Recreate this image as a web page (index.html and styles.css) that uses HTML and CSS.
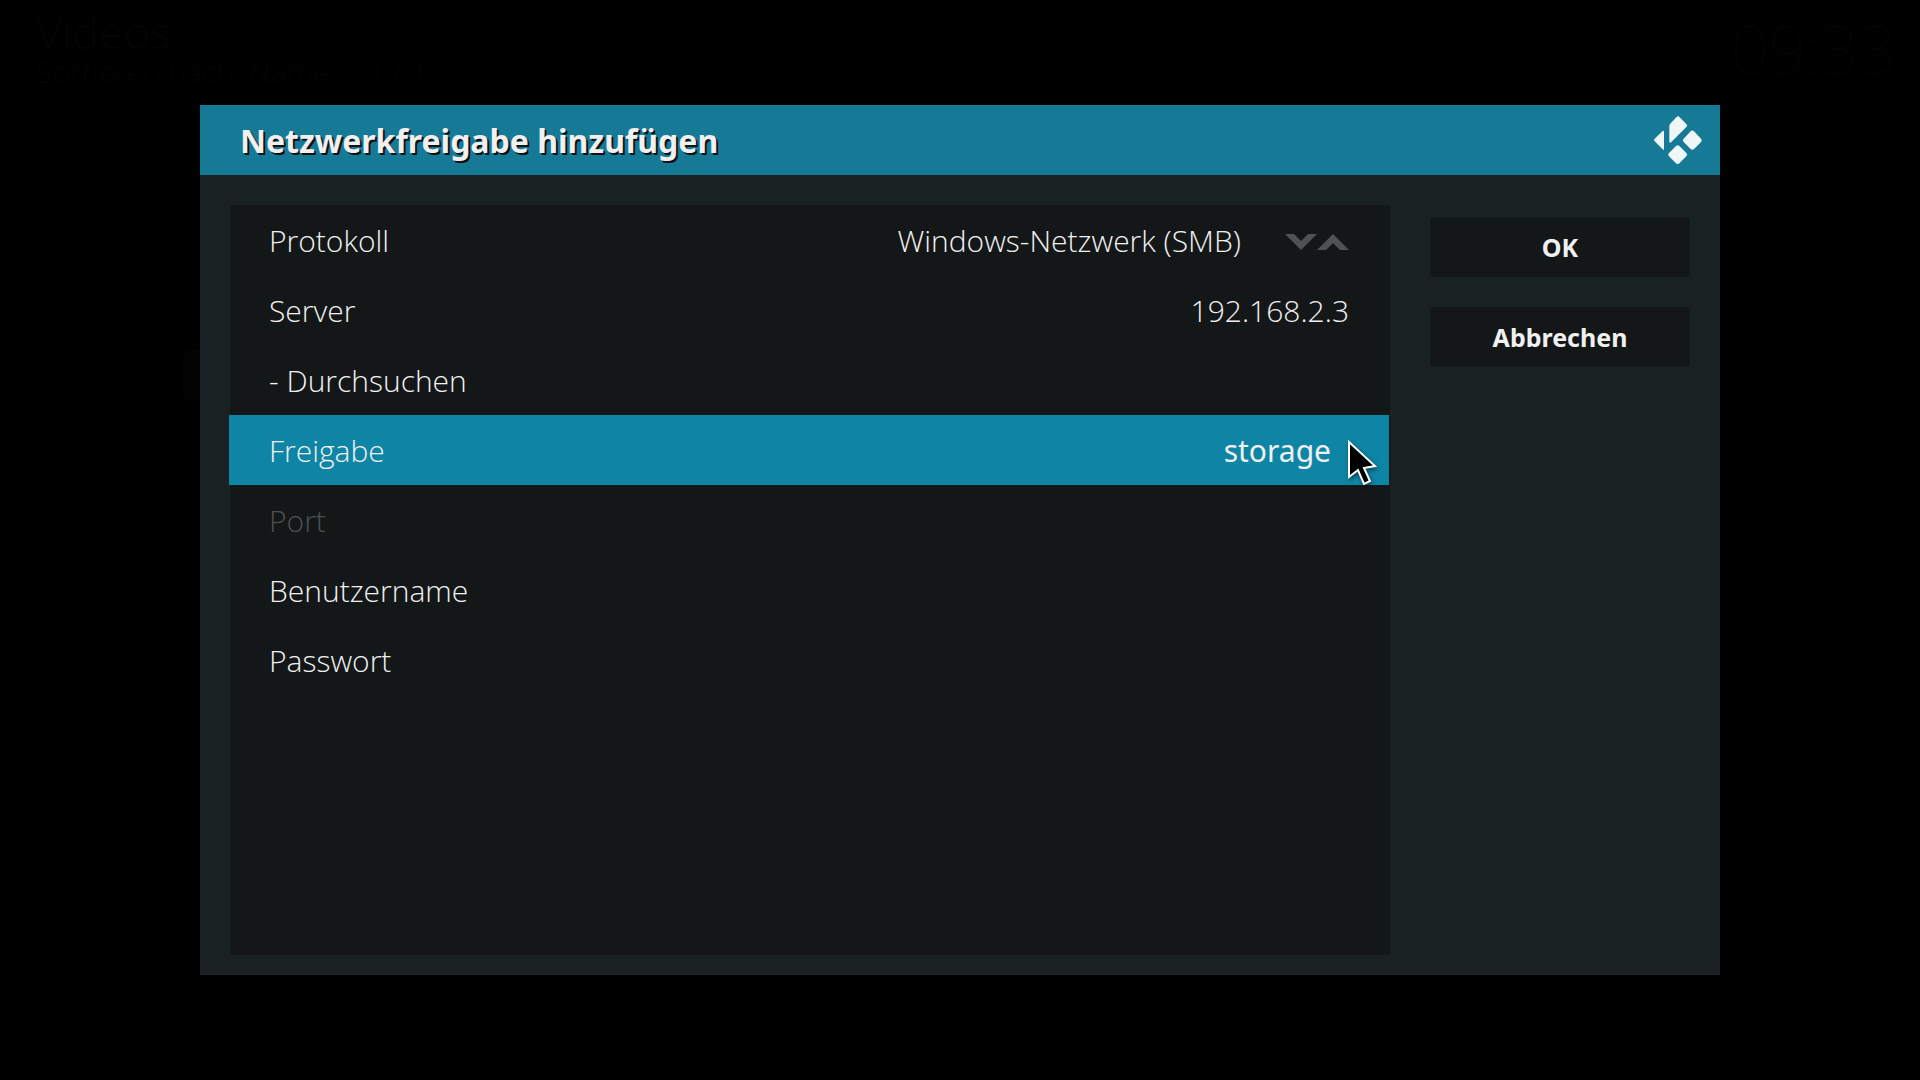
FILE: index.html
```html
<!DOCTYPE html>
<html lang="de">
<head>
    <meta charset="UTF-8">
    <meta name="viewport" content="width=device-width, initial-scale=1.0">
    <title>Netzwerkfreigabe hinzufügen</title>
    <link rel="stylesheet" href="styles.css">
</head>
<body>
    <header class="topbar">
        <div class="breadcrumb">
            <div class="section">Videos</div>
            <div class="sorting">Sortieren nach: Name &nbsp;·&nbsp; 1 / 1</div>
        </div>
        <time class="clock">09:33</time>
    </header>
    <div class="background-item"></div>

    <main class="dialog">
        <div class="dialog-header">
            <h1>Netzwerkfreigabe hinzufügen</h1>
            <svg class="logo" viewBox="0 0 144 144" aria-hidden="true">
                <path d="M30 47V99Q30 104 26 100L2 76Q-2 72 2 68L26 45Q30 42 30 47Z"/>
                <path d="M46 76V31Q46 26 50 22L67 4Q72 -2 77 4L97 24Q102 28 97 33L52 78Q46 83 46 76Z"/>
                <path d="M110 46Q115 41 120 46L141 68Q146 73 141 78L120 99Q115 104 110 99L89 78Q84 73 89 68Z"/>
                <path d="M66 90Q71 85 76 90L97 111Q102 116 97 121L76 142Q71 147 66 142L45 121Q40 116 45 111Z"/>
            </svg>
        </div>
        <form class="dialog-body">
            <div class="settings">
                <div class="row">
                    <label for="protocol">Protokoll</label>
                    <select id="protocol" name="protocol">
                        <option>Windows-Netzwerk (SMB)</option>
                    </select>
                    <div class="spinner">
                        <button type="button" aria-label="Weiter">
                            <svg viewBox="0 0 32 16"><path d="M0 0H9L16 7L23 0H32L16 16Z"/></svg>
                        </button>
                        <button type="button" aria-label="Zurück">
                            <svg viewBox="0 0 32 16"><path d="M0 16H9L16 9L23 16H32L16 0Z"/></svg>
                        </button>
                    </div>
                </div>
                <div class="row">
                    <label for="server">Server</label>
                    <input type="text" id="server" name="server" value="192.168.2.3">
                </div>
                <button type="button" class="row browse">- Durchsuchen</button>
                <div class="row focused">
                    <label for="share">Freigabe</label>
                    <input type="text" id="share" name="share" value="storage">
                    <svg class="pointer" viewBox="0 0 32 48" aria-hidden="true">
                        <path d="M2 2V37L11 30L17 44L23 41L17 28L28 26Z"/>
                    </svg>
                </div>
                <div class="row disabled">
                    <label for="port">Port</label>
                    <input type="text" id="port" name="port" disabled>
                </div>
                <div class="row">
                    <label for="username">Benutzername</label>
                    <input type="text" id="username" name="username">
                </div>
                <div class="row">
                    <label for="password">Passwort</label>
                    <input type="password" id="password" name="password">
                </div>
            </div>
            <div class="actions">
                <button type="submit">OK</button>
                <button type="button">Abbrechen</button>
            </div>
        </form>
    </main>
</body>
</html>
```

FILE: styles.css
```css
* {
    box-sizing: border-box;
}
body {
    display: flex;
    flex-direction: column;
    min-height: 100vh;
    margin: 0;
    padding-bottom: 105px;
    background: #000;
    color: #f0f0f0;
    font-family: "Open Sans", "Noto Sans", sans-serif;
    font-size: 30px;
    font-weight: 300;
}
button,
input,
select {
    margin: 0;
    padding: 0;
    border: none;
    background: none;
    color: inherit;
    font: inherit;
    outline: none;
}

/* Dimmed window behind the dialog */
.topbar {
    display: flex;
    justify-content: space-between;
    height: 105px;
    padding: 8px 24px 0 36px;
    color: #040404;
}
.section {
    font-size: 45px;
    line-height: 48px;
}
.sorting {
    line-height: 32px;
}
.clock {
    font-family: "Noto Sans", sans-serif;
    font-size: 66px;
    font-weight: 100;
    line-height: 80px;
}
.background-item {
    position: absolute;
    top: 350px;
    left: 183px;
    width: 60px;
    height: 50px;
    border-radius: 6px;
    background: #030303;
}

/* Dialog */
.dialog {
    position: relative;
    display: flex;
    flex-direction: column;
    flex: 1;
    margin: 0 200px;
    background: #1a2123;
}
.dialog-header {
    display: flex;
    align-items: center;
    justify-content: space-between;
    height: 70px;
    padding: 0 18px 0 40px;
    background: #167a97;
}
h1 {
    margin: 0;
    font-family: "Noto Sans", sans-serif;
    font-size: 32px;
    font-weight: 700;
    text-shadow: 2px 2px 0 #111;
}
.logo {
    width: 48px;
    height: 48px;
    fill: #eef6f8;
    overflow: visible;
}
.dialog-body {
    display: flex;
    flex: 1;
    gap: 40px;
    padding: 30px 30px 20px;
}

/* Settings list */
.settings {
    flex: 1;
    border-radius: 4px;
    background: #141718;
}
.row {
    position: relative;
    display: flex;
    align-items: center;
    width: 100%;
    height: 70px;
    margin-left: -1px;
    padding: 0 40px;
}
.row input,
.row select {
    flex: 1;
    min-width: 0;
    height: 70px;
    text-align: right;
    text-align-last: right;
    appearance: none;
}
.browse {
    text-align: left;
}
.focused {
    background: #0f85a5;
}
.focused input {
    padding-right: 18px;
    font-family: "Noto Sans", sans-serif;
    font-weight: 400;
}
.disabled {
    color: #4d5051;
}
.spinner {
    display: flex;
    margin-left: 44px;
    padding-top: 4px;
}
.spinner button {
    display: flex;
}
.spinner svg {
    width: 32px;
    height: 16px;
    fill: #4f5152;
}
.pointer {
    position: absolute;
    top: 25px;
    right: 10px;
    width: 32px;
    height: 48px;
    fill: #000;
    stroke: #fff;
    stroke-width: 2;
    filter: drop-shadow(1px 2px 2px rgba(0, 0, 0, 0.5));
}

/* Buttons */
.actions {
    display: flex;
    flex-direction: column;
    gap: 30px;
    width: 260px;
    padding-top: 12px;
}
.actions button {
    height: 60px;
    border-radius: 4px;
    background: #141718;
    font-family: "Noto Sans", sans-serif;
    font-size: 25px;
    font-weight: 700;
}
```
